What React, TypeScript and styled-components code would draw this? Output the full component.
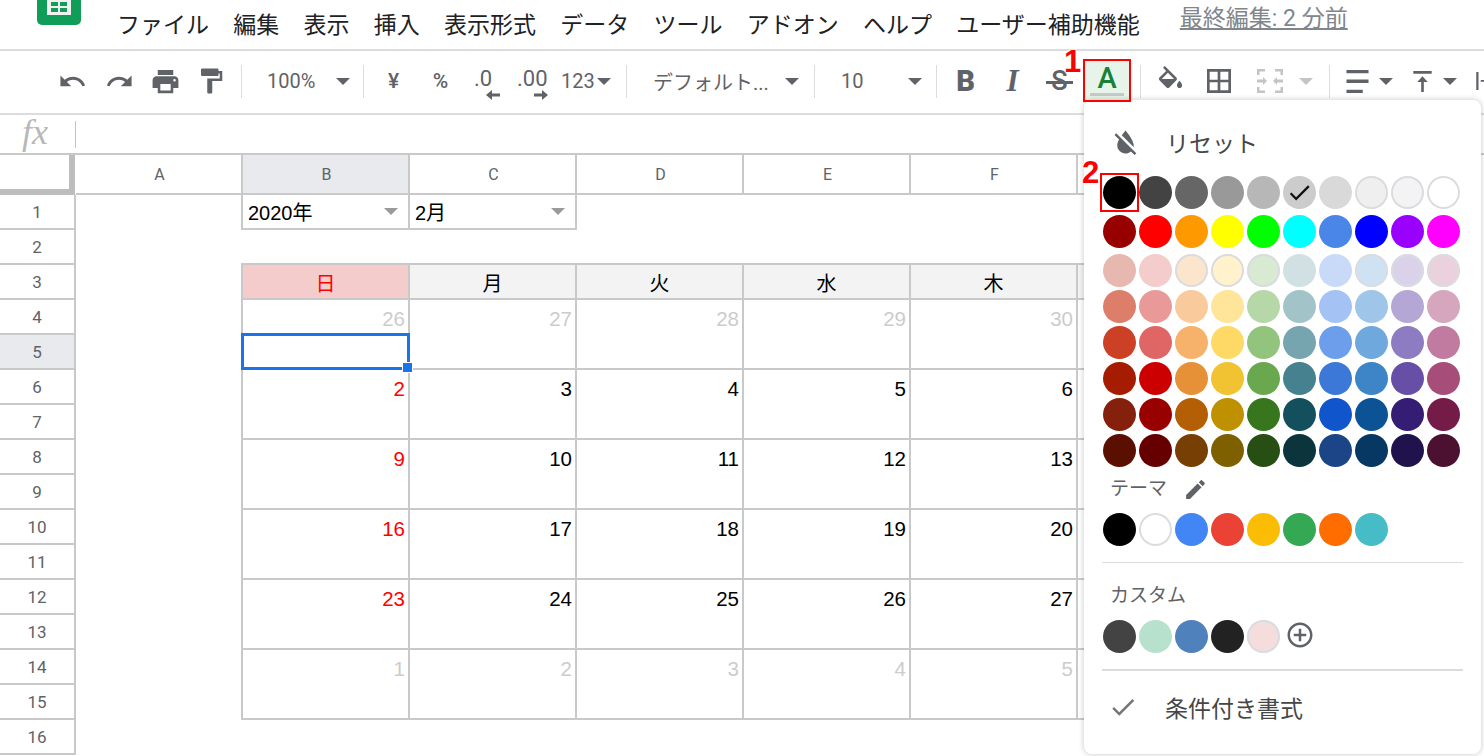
import React from "react";
import styled, { createGlobalStyle } from "styled-components";

const GlobalStyle = createGlobalStyle`
  html, body {
    margin: 0;
    padding: 0;
    width: 1484px;
    height: 756px;
    overflow: hidden;
    background: #fff;
  }
  * { box-sizing: border-box; }
`;

const GRID_LINE = "#c9c9c9";
const ICON_GREY = "#5f6368";
const CJK = `Roboto, "Noto Sans CJK JP", sans-serif`;

const Page = styled.div`
  position: relative;
  width: 1484px;
  height: 756px;
  overflow: hidden;
  font-family: ${CJK};
  color: #000;
`;

/* ---------- menu ---------- */
const MenuBar = styled.div`
  display: flex;
  align-items: flex-start;
  height: 51px;
  padding-left: 37px;
  border-bottom: 2px solid #dadce0;
`;

const Logo = styled.svg`
  width: 44px;
  height: 25px;
  margin-right: 36px;
  flex: none;
`;

const MenuList = styled.div`
  display: flex;
  gap: 24.25px;
  height: 45px;
  align-items: center;
  font-size: 23px;
  color: #202124;
`;

const LastEdit = styled.a`
  margin: 5px 0 0 40px;
  font-size: 23px;
  line-height: 28px;
  color: #80868b;
  text-decoration: underline;
`;

/* ---------- toolbar ---------- */
const Toolbar = styled.div`
  display: flex;
  align-items: center;
  height: 64px;
  padding: 0 0 2px 48px;
  border-bottom: 2px solid #dadce0;
  color: ${ICON_GREY};
  white-space: nowrap;
`;

const Tool = styled.div<{ $w: number; $ml?: number }>`
  flex: none;
  display: flex;
  align-items: center;
  justify-content: center;
  width: ${(p) => p.$w}px;
  margin-left: ${(p) => p.$ml ?? 0}px;
  height: 34px;
`;

const SelectTool = styled.div<{ $w: number; $pl: number; $pr: number }>`
  flex: none;
  display: flex;
  align-items: center;
  justify-content: space-between;
  width: ${(p) => p.$w}px;
  padding: 0 ${(p) => p.$pr}px 0 ${(p) => p.$pl}px;
  font-size: 20px;
`;

const Separator = styled.div<{ $ml?: number }>`
  flex: none;
  width: 1px;
  height: 33px;
  margin-left: ${(p) => p.$ml ?? 0}px;
  background: #dadce0;
`;

const Caret = styled.span<{ $color?: string; $size?: number }>`
  flex: none;
  width: 0;
  height: 0;
  border-left: ${(p) => p.$size ?? 7}px solid transparent;
  border-right: ${(p) => p.$size ?? 7}px solid transparent;
  border-top: ${(p) => p.$size ?? 7}px solid ${(p) => p.$color ?? ICON_GREY};
`;

const SymbolText = styled.span`
  font-family: Roboto, "Liberation Sans", sans-serif;
  font-size: 21px;
  font-weight: 500;
`;

const DecimalStack = styled.div`
  display: flex;
  flex-direction: column;
  align-items: flex-start;
  font-size: 22px;
  line-height: 21px;
  margin-top: 6px;
`;

const DecimalArrow = styled.svg<{ $ml: number }>`
  width: 14px;
  height: 10px;
  margin: 1px 0 0 ${(p) => p.$ml}px;
  fill: ${ICON_GREY};
`;

const FormatLetter = styled.span<{ $italic?: boolean }>`
  font-family: ${(p) => (p.$italic ? `"Liberation Serif", serif` : `Roboto, "Liberation Sans", sans-serif`)};
  font-size: ${(p) => (p.$italic ? 31 : 29)}px;
  font-weight: ${(p) => (p.$italic ? 700 : 900)};
  font-style: ${(p) => (p.$italic ? "italic" : "normal")};
  line-height: 30px;
`;

const StruckLetter = styled.span`
  position: relative;
  font-family: Roboto, "Liberation Sans", sans-serif;
  font-size: 27px;
  font-weight: 500;
  line-height: 30px;

  &::after {
    content: "";
    position: absolute;
    left: -5px;
    right: -5px;
    top: 15px;
    height: 3px;
    background: ${ICON_GREY};
  }
`;

const TextColorTool = styled.div`
  flex: none;
  width: 48px;
  height: 43px;
  display: flex;
  flex-direction: column;
  align-items: center;
  padding-top: 4px;
  background: #e6f4ea;
  color: #188038;
  font-family: Roboto, "Liberation Sans", sans-serif;
  font-size: 29px;
  font-weight: 500;
  line-height: 28px;
`;

const ColorBar = styled.span`
  width: 34px;
  height: 3px;
  margin-top: 1px;
  background: #c8c8c8;
`;

const Icon = styled.svg<{ $size: number; $color?: string }>`
  flex: none;
  width: ${(p) => p.$size}px;
  height: ${(p) => p.$size}px;
  fill: ${(p) => p.$color ?? ICON_GREY};
`;

const IconGroup = styled.div<{ $w: number; $pl: number; $gap: number }>`
  flex: none;
  display: flex;
  align-items: center;
  width: ${(p) => p.$w}px;
  padding-left: ${(p) => p.$pl}px;
  gap: ${(p) => p.$gap}px;
`;

/* ---------- formula bar ---------- */
const FormulaBar = styled.div`
  display: flex;
  align-items: center;
  height: 40px;
  border-bottom: 2px solid ${GRID_LINE};
`;

const FxLabel = styled.span`
  width: 75px;
  padding: 0 0 5px 22px;
  font-family: "Liberation Serif", serif;
  font-style: italic;
  font-size: 36px;
  line-height: 32px;
  color: #b8b8b8;
`;

const FormulaDivider = styled.span`
  width: 1px;
  height: 27px;
  background: #c4c4c4;
`;

/* ---------- sheet ---------- */
const Sheet = styled.div`
  display: grid;
  grid-template-columns: 76px repeat(7, 167px);
  grid-auto-rows: 35px;
  grid-template-rows: 40px;
  width: 1484px;
  font-family: "Liberation Sans", "Noto Sans CJK JP", sans-serif;
`;

const Corner = styled.div`
  border-right: 6px solid #bdbdbd;
  border-bottom: 6px solid #bdbdbd;
  margin-right: 1px;
`;

const ColHead = styled.div<{ $active?: boolean }>`
  display: flex;
  align-items: center;
  justify-content: center;
  padding-left: 2px;
  border-right: 2px solid ${GRID_LINE};
  border-bottom: 2px solid ${GRID_LINE};
  background: ${(p) => (p.$active ? "#e8eaed" : "#fff")};
  font-family: Roboto, sans-serif;
  font-size: 16px;
  color: ${ICON_GREY};
`;

const RowHead = styled.div<{ $active?: boolean; $row: number }>`
  grid-column: 1;
  grid-row: ${(p) => p.$row + 1};
  display: flex;
  align-items: center;
  justify-content: center;
  border-right: 2px solid ${GRID_LINE};
  border-bottom: 2px solid ${GRID_LINE};
  background: ${(p) => (p.$active ? "#e8eaed" : "#fff")};
  font-family: Roboto, sans-serif;
  font-size: 17px;
  color: ${ICON_GREY};
`;

/* $col counts from the row header: 1 = column A, 2 = column B */
const Cell = styled.div<{ $col: number; $row: number; $span?: number; $bg?: string; $top?: boolean }>`
  grid-column: ${(p) => p.$col + 1};
  grid-row: ${(p) => p.$row + 1} / span ${(p) => p.$span ?? 1};
  margin-left: ${(p) => (p.$col === 2 ? -2 : 0)}px;
  margin-top: ${(p) => (p.$top ? -2 : 0)}px;
  border-left: ${(p) => (p.$col === 2 ? `2px solid ${GRID_LINE}` : "none")};
  border-top: ${(p) => (p.$top ? `2px solid ${GRID_LINE}` : "none")};
  border-right: 2px solid ${GRID_LINE};
  border-bottom: 2px solid ${GRID_LINE};
  background: ${(p) => p.$bg ?? "#fff"};
`;

const SelectCell = styled(Cell)`
  display: flex;
  align-items: center;
  justify-content: space-between;
  padding: 0 10px 0 5px;
  font-size: 20px;
`;

const DayCell = styled(Cell)<{ $red?: boolean }>`
  display: flex;
  align-items: center;
  justify-content: center;
  font-size: 20px;
  padding-top: 2px;
  color: ${(p) => (p.$red ? "#ff0000" : "#000")};
`;

const DateCell = styled(Cell)<{ $tone: string }>`
  padding: 4px 3px 0 0;
  text-align: right;
  font-size: 20.5px;
  line-height: 30px;
  color: ${(p) => p.$tone};
`;

const Selection = styled.div`
  position: relative;
  grid-column: 3;
  grid-row: 6;
  margin: -2px 0 0 -2px;
  border: 3px solid #1a73e8;
  z-index: 1;
`;

const FillHandle = styled.span`
  position: absolute;
  right: -6px;
  bottom: -6px;
  width: 11px;
  height: 11px;
  background: #1a73e8;
  border: 1px solid #fff;
`;

/* ---------- colour popup ---------- */
const Popup = styled.div`
  position: absolute;
  left: 1084px;
  top: 100px;
  width: 397px;
  height: 654px;
  background: #fff;
  border-radius: 8px;
  box-shadow: 0 0 5px 1px rgba(60, 64, 67, 0.22);
  z-index: 2;
`;

const PopupRow = styled.div<{ $h: number; $pt?: number; $pl: number; $gap: number }>`
  display: flex;
  align-items: center;
  height: ${(p) => p.$h}px;
  padding: ${(p) => p.$pt ?? 0}px 0 0 ${(p) => p.$pl}px;
  gap: ${(p) => p.$gap}px;
  font-size: 23px;
  color: #444746;
`;

const Palette = styled.div`
  display: flex;
  flex-direction: column;
  padding-left: 19px;
`;

const SwatchRow = styled.div<{ $mb?: number }>`
  display: flex;
  align-items: center;
  gap: 3px;
  margin-bottom: ${(p) => p.$mb ?? 3}px;
`;

const Swatch = styled.span<{ $color: string; $ring?: boolean }>`
  flex: none;
  display: flex;
  align-items: center;
  justify-content: center;
  width: 33px;
  height: 33px;
  border-radius: 50%;
  background: ${(p) => p.$color};
  box-shadow: ${(p) => (p.$ring ? "inset 0 0 0 2px #dadce0" : "none")};
`;

const AddCustom = styled.span`
  display: flex;
  margin: 0 0 3px 2px;
`;

const SectionLabel = styled.div<{ $pt: number; $pb: number }>`
  display: flex;
  align-items: center;
  gap: 16px;
  padding: ${(p) => p.$pt}px 0 ${(p) => p.$pb}px 26px;
  font-size: 19px;
  line-height: 28px;
  color: #5f6368;
`;

const Divider = styled.div<{ $h?: number; $mt: number }>`
  width: 361px;
  height: ${(p) => p.$h ?? 1}px;
  margin: ${(p) => p.$mt}px 0 0 18px;
  background: #dadce0;
`;

/* ---------- red annotations ---------- */
const MarkBox = styled.div<{ $x: number; $y: number; $w: number; $h: number }>`
  position: absolute;
  left: ${(p) => p.$x}px;
  top: ${(p) => p.$y}px;
  width: ${(p) => p.$w}px;
  height: ${(p) => p.$h}px;
  border: 2px solid #ff0000;
  z-index: 3;
`;

const MarkNumber = styled.span<{ $x: number; $y: number }>`
  position: absolute;
  left: ${(p) => p.$x}px;
  top: ${(p) => p.$y}px;
  font-family: "Liberation Sans", sans-serif;
  font-weight: 700;
  font-size: 31px;
  line-height: 31px;
  color: #ff0000;
  text-shadow: 0 0 2px #fff, 0 0 2px #fff, 0 0 3px #fff;
  z-index: 3;
`;

const MENU = ["ファイル", "編集", "表示", "挿入", "表示形式", "データ", "ツール", "アドオン", "ヘルプ", "ユーザー補助機能"];
const COLS = ["A", "B", "C", "D", "E", "F", ""];
const DAYS = ["日", "月", "火", "水", "木"];

const GREYS = ["#000000", "#434343", "#666666", "#999999", "#b7b7b7", "#cccccc", "#d9d9d9", "#efefef", "#f3f3f3", "#ffffff"];
const BRIGHTS = ["#980000", "#ff0000", "#ff9900", "#ffff00", "#00ff00", "#00ffff", "#4a86e8", "#0000ff", "#9900ff", "#ff00ff"];
const SHADES = [
  ["#e6b8af", "#f4cccc", "#fce5cd", "#fff2cc", "#d9ead3", "#d0e0e3", "#c9daf8", "#cfe2f3", "#d9d2e9", "#ead1dc"],
  ["#dd7e6b", "#ea9999", "#f9cb9c", "#ffe599", "#b6d7a8", "#a2c4c9", "#a4c2f4", "#9fc5e8", "#b4a7d6", "#d5a6bd"],
  ["#cc4125", "#e06666", "#f6b26b", "#ffd966", "#93c47d", "#76a5af", "#6d9eeb", "#6fa8dc", "#8e7cc3", "#c27ba0"],
  ["#a61c00", "#cc0000", "#e69138", "#f1c232", "#6aa84f", "#45818e", "#3c78d8", "#3d85c6", "#674ea7", "#a64d79"],
  ["#85200c", "#990000", "#b45f06", "#bf9000", "#38761d", "#134f5c", "#1155cc", "#0b5394", "#351c75", "#741b47"],
  ["#5b0f00", "#660000", "#783f04", "#7f6000", "#274e13", "#0c343d", "#1c4587", "#073763", "#20124d", "#4c1130"],
];
const THEME = ["#000000", "#ffffff", "#4285f4", "#ea4335", "#fbbc04", "#34a853", "#ff6d01", "#46bdc6"];
const CUSTOM = ["#434343", "#b7e1cd", "#4f81bd", "#222222", "#f4dddc"];
const RINGED = ["#efefef", "#f3f3f3", "#ffffff", "#fce5cd", "#fff2cc", "#d9ead3", "#cfe2f3", "#d9d2e9", "#ead1dc", "#f4dddc"];

const WEEKS = [
  { row: 4, dates: [26, 27, 28, 29, 30], muted: true },
  { row: 6, dates: [2, 3, 4, 5, 6], muted: false },
  { row: 8, dates: [9, 10, 11, 12, 13], muted: false },
  { row: 10, dates: [16, 17, 18, 19, 20], muted: false },
  { row: 12, dates: [23, 24, 25, 26, 27], muted: false },
  { row: 14, dates: [1, 2, 3, 4, 5], muted: true },
];

const CHECK = "M9 16.17L4.83 12l-1.42 1.41L9 19 21 7l-1.41-1.41z";

const Glyph: React.FC<{ d: string; size: number; color?: string }> = ({ d, size, color }) => (
  <Icon viewBox="0 0 24 24" $size={size} $color={color}>
    <path d={d} />
  </Icon>
);

const Swatches: React.FC<{ colors: string[]; mb?: number; checked?: string; children?: React.ReactNode }> = ({
  colors,
  mb,
  checked,
  children,
}) => (
  <SwatchRow $mb={mb}>
    {colors.map((c, i) => (
      <Swatch key={i} $color={c} $ring={RINGED.includes(c)}>
        {c === checked && <Glyph d={CHECK} size={27} color="#111" />}
      </Swatch>
    ))}
    {children}
  </SwatchRow>
);

export default function App() {
  return (
    <Page>
      <GlobalStyle />

      <MenuBar>
        <Logo viewBox="0 0 44 25">
          <path d="M0 0h44v20a5 5 0 0 1-5 5H5a5 5 0 0 1-5-5z" fill="#0f9d58" />
          <rect x="10" y="0" width="24" height="15" fill="#f1f1f1" />
          <rect x="14" y="2" width="7" height="4" fill="#0f9d58" />
          <rect x="23" y="2" width="7" height="4" fill="#0f9d58" />
          <rect x="14" y="8" width="7" height="4" fill="#0f9d58" />
          <rect x="23" y="8" width="7" height="4" fill="#0f9d58" />
        </Logo>
        <MenuList>
          {MENU.map((m) => (
            <span key={m}>{m}</span>
          ))}
        </MenuList>
        <LastEdit>最終編集: 2 分前</LastEdit>
      </MenuBar>

      <Toolbar>
        <Tool $w={48}>
          <Glyph size={29} d="M12.5 8c-2.65 0-5.05.99-6.9 2.6L2 7v9h9l-3.62-3.62c1.39-1.16 3.16-1.88 5.12-1.88 3.54 0 6.55 2.31 7.6 5.5l2.37-.78C21.08 11.03 17.15 8 12.5 8z" />
        </Tool>
        <Tool $w={46}>
          <Glyph size={29} d="M18.4 10.6C16.55 8.99 14.15 8 11.5 8c-4.65 0-8.58 3.03-9.96 7.22L3.9 16c1.05-3.19 4.05-5.5 7.6-5.5 1.95 0 3.73.72 5.12 1.88L13 16h9V7l-3.6 3.6z" />
        </Tool>
        <Tool $w={46}>
          <Glyph size={31} d="M19 8H5c-1.66 0-3 1.34-3 3v6h4v4h12v-4h4v-6c0-1.66-1.34-3-3-3zm-3 11H8v-5h8v5zm3-7c-.55 0-1-.45-1-1s.45-1 1-1 1 .45 1 1-.45 1-1 1zm-1-9H6v4h12V3z" />
        </Tool>
        <Tool $w={46}>
          <Glyph size={30} d="M18 4V3c0-.55-.45-1-1-1H5c-.55 0-1 .45-1 1v4c0 .55.45 1 1 1h12c.55 0 1-.45 1-1V6h1v4H9v11c0 .55.45 1 1 1h2c.55 0 1-.45 1-1v-9h8V4h-3z" />
        </Tool>
        <Separator $ml={7} />
        <SelectTool $w={121} $pl={25} $pr={13}>
          <span>100%</span>
          <Caret />
        </SelectTool>
        <Separator />
        <Tool $w={47} $ml={6}>
          <SymbolText>¥</SymbolText>
        </Tool>
        <Tool $w={47}>
          <SymbolText>%</SymbolText>
        </Tool>
        <Tool $w={46}>
          <DecimalStack>
            <span>.0</span>
            <DecimalArrow viewBox="0 0 14 10" $ml={12}>
              <path d="M14 3.500H6V0L0 5l6 5V6.500h8z" />
            </DecimalArrow>
          </DecimalStack>
        </Tool>
        <Tool $w={45}>
          <DecimalStack>
            <span>.00</span>
            <DecimalArrow viewBox="0 0 14 10" $ml={17}>
              <path d="M0 3.500h8V0l6 5-6 5V6.500H0z" />
            </DecimalArrow>
          </DecimalStack>
        </Tool>
        <SelectTool $w={71} $pl={6} $pr={15}>
          <span>123</span>
          <Caret />
        </SelectTool>
        <Separator />
        <SelectTool $w={187} $pl={26} $pr={15}>
          <span>デフォルト...</span>
          <Caret />
        </SelectTool>
        <Separator />
        <SelectTool $w={121} $pl={26} $pr={14}>
          <span>10</span>
          <Caret />
        </SelectTool>
        <Separator />
        <Tool $w={47} $ml={5}>
          <FormatLetter>B</FormatLetter>
        </Tool>
        <Tool $w={47}>
          <FormatLetter $italic>I</FormatLetter>
        </Tool>
        <Tool $w={47}>
          <StruckLetter>S</StruckLetter>
        </Tool>
        <TextColorTool>
          <span>A</span>
          <ColorBar />
        </TextColorTool>
        <Separator $ml={9} />
        <Tool $w={46} $ml={6}>
          <Glyph size={31} d="M16.56 8.94L7.62 0 6.21 1.41l2.38 2.38-5.15 5.15c-.59.59-.59 1.54 0 2.12l5.5 5.5c.29.29.68.44 1.06.44s.77-.15 1.06-.44l5.5-5.5c.59-.58.59-1.53 0-2.12zM5.21 10L10 5.21 14.79 10H5.21zM19 11.5s-2 2.17-2 3.5c0 1.1.9 2 2 2s2-.9 2-2c0-1.33-2-3.5-2-3.5z" />
        </Tool>
        <Tool $w={52}>
          <Glyph size={32} d="M3 3v18h18V3H3zm8 16H5v-6h6v6zm0-8H5V5h6v6zm8 8h-6v-6h6v6zm0-8h-6V5h6v6z" />
        </Tool>
        <Tool $w={50}>
          <Icon viewBox="0 0 26 24" $size={26} $color="#c4c4c4">
            <path d="M0 0h8v2.500H2.500V6H0zM18 0h8v6h-2.500V2.500H18zM0 18h2.500v3.500H8V24H0zM23.500 18H26v6h-8v-2.500h5.500zM0 10.500h6V8l4 4-4 4v-2.500H0zM26 10.500h-6V8l-4 4 4 4v-2.500h6z" />
          </Icon>
        </Tool>
        <Tool $w={22}>
          <Caret $color="#c4c4c4" />
        </Tool>
        <Separator $ml={12} />
        <IconGroup $w={70} $pl={16} $gap={10}>
          <Icon viewBox="0 0 23 24" $size={23}>
            <path d="M0 0h23v3.500H0zM0 10h23v3.500H0zM0 20.500h17V24H0z" />
          </Icon>
          <Caret />
        </IconGroup>
        <IconGroup $w={65} $pl={12} $gap={10}>
          <Icon viewBox="0 0 21 24" $size={21}>
            <path d="M0 0h21v3H0zM10.500 6l6 6.500h-4.500V24H9V12.500H4.500z" />
          </Icon>
          <Caret />
        </IconGroup>
        <Tool $w={18} $ml={9}>
          <Icon viewBox="0 0 18 24" $size={18}>
            <path d="M0 0h3v24H0zM6 10.500h6V13H6z" />
          </Icon>
        </Tool>
      </Toolbar>

      <FormulaBar>
        <FxLabel>fx</FxLabel>
        <FormulaDivider />
      </FormulaBar>

      <Sheet>
        <Corner />
        {COLS.map((c) => (
          <ColHead key={c} $active={c === "B"}>
            {c}
          </ColHead>
        ))}

        {Array.from({ length: 16 }, (_, i) => i + 1).map((n) => (
          <RowHead key={n} $row={n} $active={n === 5}>
            {n}
          </RowHead>
        ))}

        <SelectCell $col={2} $row={1}>
          <span>2020年</span>
          <Caret $color="#9a9a9a" />
        </SelectCell>
        <SelectCell $col={3} $row={1}>
          <span>2月</span>
          <Caret $color="#9a9a9a" />
        </SelectCell>

        {DAYS.map((d, i) => (
          <DayCell key={d} $col={i + 2} $row={3} $top $red={i === 0} $bg={i === 0 ? "#f4cccc" : "#f3f3f3"}>
            {d}
          </DayCell>
        ))}
        <Cell $col={7} $row={3} $top $bg="#f3f3f3" />

        {WEEKS.map((w) => (
          <React.Fragment key={w.row}>
            {w.dates.map((n, i) => (
              <DateCell
                key={i}
                $col={i + 2}
                $row={w.row}
                $span={2}
                $tone={w.muted ? "#cccccc" : i === 0 ? "#ff0000" : "#000000"}
              >
                {n}
              </DateCell>
            ))}
            <Cell $col={7} $row={w.row} $span={2} />
          </React.Fragment>
        ))}

        <Selection>
          <FillHandle />
        </Selection>
      </Sheet>

      <Popup>
        <PopupRow $h={76} $pt={8} $pl={25} $gap={24}>
          <Glyph size={33} d="M18 14c0-4-6-10.800-6-10.800s-1.330 1.510-2.730 3.520l8.590 8.590c.090-.420.140-.860.140-1.310zm-.880 3.120L12.500 12.500 5.270 5.270 4 6.550l3.320 3.320C6.550 11.320 6 12.790 6 14c0 3.310 2.690 6 6 6 1.520 0 2.900-.570 3.960-1.500l2.630 2.630 1.270-1.270-2.740-2.740z" />
          <span>リセット</span>
        </PopupRow>
        <Palette>
          <Swatches colors={GREYS} mb={6} checked="#cccccc" />
          <Swatches colors={BRIGHTS} mb={6} />
          {SHADES.map((row, i) => (
            <Swatches key={i} colors={row} mb={i === SHADES.length - 1 ? 0 : 3} />
          ))}
        </Palette>
        <SectionLabel $pt={8} $pb={10}>
          <span>テーマ</span>
          <Glyph size={25} d="M3 17.250V21h3.750L17.810 9.940l-3.750-3.750L3 17.250zM20.710 7.040c.390-.390.390-1.020 0-1.410l-2.340-2.340c-.390-.390-1.020-.390-1.410 0l-1.830 1.830 3.750 3.750 1.830-1.830z" />
        </SectionLabel>
        <Palette>
          <Swatches colors={THEME} mb={0} />
        </Palette>
        <Divider $mt={16} />
        <SectionLabel $pt={19} $pb={10}>
          <span>カスタム</span>
        </SectionLabel>
        <Palette>
          <Swatches colors={CUSTOM} mb={0}>
            <AddCustom>
              <Glyph size={30} d="M13 7h-2v4H7v2h4v4h2v-4h4v-2h-4V7zm-1-5C6.480 2 2 6.480 2 12s4.480 10 10 10 10-4.480 10-10S17.520 2 12 2zm0 18c-4.410 0-8-3.590-8-8s3.590-8 8-8 8 3.590 8 8-3.590 8-8 8z" />
            </AddCustom>
          </Swatches>
        </Palette>
        <Divider $h={2} $mt={16} />
        <PopupRow $h={71} $pl={24} $gap={27}>
          <Glyph size={30} d={CHECK} color="#757575" />
          <span>条件付き書式</span>
        </PopupRow>
      </Popup>

      <MarkNumber $x={1064} $y={46}>1</MarkNumber>
      <MarkBox $x={1083} $y={59} $w={48} $h={43} />
      <MarkNumber $x={1082} $y={157}>2</MarkNumber>
      <MarkBox $x={1100} $y={173} $w={39} $h={39} />
    </Page>
  );
}
